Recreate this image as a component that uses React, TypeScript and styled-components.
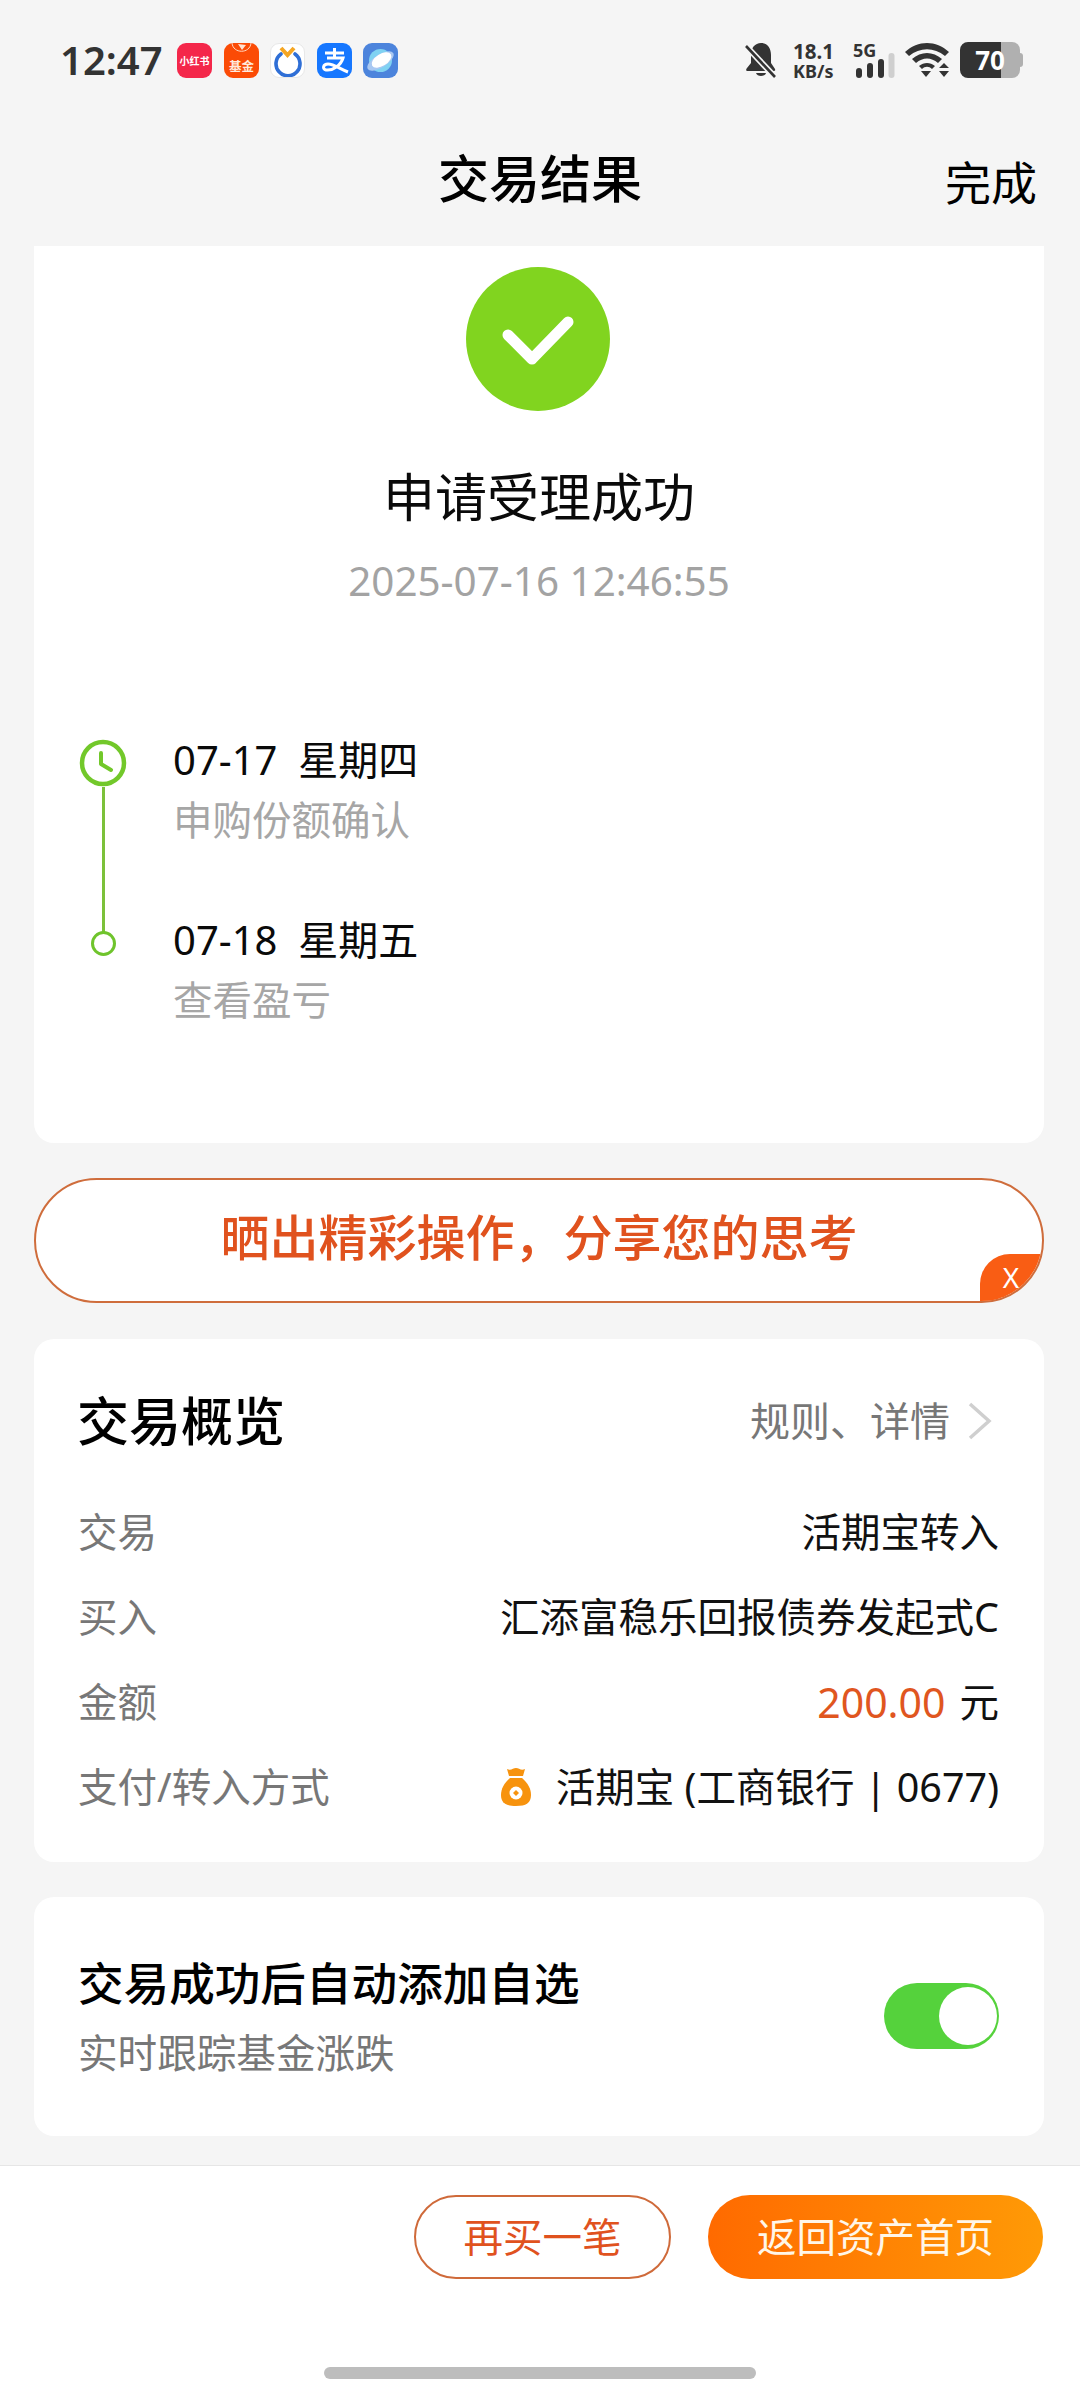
import React from "react";
import styled, { createGlobalStyle } from "styled-components";

const FONT = `"Noto Sans", "Noto Sans CJK SC", sans-serif`;

const Global = createGlobalStyle`
  html, body { margin: 0; padding: 0; background: #f5f5f5; }
  body { font-family: ${FONT}; }
`;

const Page = styled.div`
  width: 1080px;
  height: 2400px;
  display: flex;
  flex-direction: column;
  background: #f5f5f5;
  overflow: hidden;
`;

const StatusBar = styled.div`
  height: 120px;
  box-sizing: border-box;
  padding: 42px 60px 0 60px;
  display: flex;
  align-items: flex-start;
  justify-content: space-between;
`;
const StatusLeft = styled.div`
  display: flex;
  align-items: center;
  height: 36px;
`;
const Clock = styled.span`
  font: 600 40px/36px "Noto Sans", sans-serif;
  color: #333;
  width: 117px;
`;
const AppIcons = styled.div`
  display: flex;
  gap: 11.5px;
`;
const AppIcon = styled.div<{ $bg: string; $border?: boolean }>`
  width: 35px;
  height: 35px;
  border-radius: 9px;
  background: ${(p) => p.$bg};
  box-sizing: border-box;
  border: ${(p) => (p.$border ? "1px solid #e8e8e8" : "none")};
  display: flex;
  align-items: center;
  justify-content: center;
  overflow: hidden;
  color: #fff;
`;
const RedLabel = styled.span`
  font: 700 10px/11px "Noto Sans CJK SC", sans-serif;
  white-space: nowrap;
`;
const StatusRight = styled.div`
  display: flex;
  align-items: flex-start;
  height: 36px;
`;
const Speed = styled.div`
  width: 45px;
  margin-left: 16px;
  margin-top: -1px;
  display: flex;
  flex-direction: column;
  color: #333;
  font-family: "Noto Sans", sans-serif;
  font-weight: 700;
`;
const SpeedTop = styled.span`
  font-size: 20.5px;
  line-height: 20px;
`;
const SpeedBottom = styled.span`
  font-size: 18px;
  line-height: 20px;
`;
const Signal = styled.div`
  width: 42px;
  margin-left: 15px;
  display: flex;
  flex-direction: column;
  color: #333;
`;
const SignalLabel = styled.span`
  font: 700 18px/16px "Noto Sans", sans-serif;
`;
const SignalBars = styled.svg`
  overflow: visible;
  display: block;
`;
const WifiIcon = styled.svg`
  margin-left: 9px;
  display: block;
`;
const Battery = styled.div`
  position: relative;
  width: 60px;
  height: 36px;
  margin-left: 10px;
  border-radius: 8px;
  background: linear-gradient(90deg, #333 0 68%, #b0b0b0 68% 100%);
  display: flex;
  align-items: center;
  justify-content: center;
  color: #fff;
  font: 700 26px/36px "Noto Sans", sans-serif;
  &::after {
    content: "";
    position: absolute;
    right: -3px;
    top: 11px;
    width: 3px;
    height: 14px;
    border-radius: 0 3px 3px 0;
    background: #b0b0b0;
  }
`;

const Nav = styled.div`
  height: 120px;
  display: flex;
  align-items: center;
  position: relative;
  justify-content: center;
  margin-bottom: 6px;
`;
const NavTitle = styled.h1`
  margin: 0 0 4px;
  font: 500 51px/60px ${FONT};
  color: #000;
`;
const NavAction = styled.span`
  position: absolute;
  right: 43px;
  top: 32px;
  font: 400 46px/60px ${FONT};
  color: #000;
`;

const Content = styled.div`
  padding: 0 34px;
  display: flex;
  flex-direction: column;
`;
const Card = styled.section<{ $squareTop?: boolean }>`
  background: #fff;
  border-radius: ${(p) => (p.$squareTop ? "0 0 20px 20px" : "20px")};
  box-sizing: border-box;
  width: 1010px;
`;
const ResultCard = styled(Card)`
  height: 897px;
  padding-top: 21px;
  display: flex;
  flex-direction: column;
`;
const SuccessMark = styled.div`
  width: 144px;
  height: 144px;
  border-radius: 50%;
  background: #81d41f;
  align-self: center;
  margin-left: -2px;
  display: flex;
  align-items: center;
  justify-content: center;
`;
const ResultTitle = styled.div`
  margin-top: 51px;
  text-align: center;
  font: 400 52px/70px ${FONT};
  color: #0a0a0a;
`;
const ResultTime = styled.div`
  margin-top: 21px;
  text-align: center;
  font: 400 40.4px/56px ${FONT};
  color: #a3a3a3;
`;
const Timeline = styled.div`
  margin-top: 121px;
  padding-left: 45px;
  display: flex;
  flex-direction: column;
`;
const Step = styled.div<{ $last?: boolean }>`
  display: flex;
  height: ${(p) => (p.$last ? "120px" : "180px")};
`;
const StepRail = styled.div`
  width: 48px;
  margin-right: 46px;
  display: flex;
  flex-direction: column;
  align-items: center;
  padding-top: 9px;
`;
const ClockMark = styled.svg`
  display: block;
  flex: none;
`;
const RailLine = styled.div`
  width: 3px;
  flex: 1;
  margin-bottom: -22px;
  background: #7cc13a;
`;
const EndDot = styled.div`
  width: 25px;
  height: 25px;
  box-sizing: border-box;
  border: 3px solid #6fc42c;
  border-radius: 50%;
  margin-top: 12px;
  flex: none;
`;
const StepText = styled.div`
  display: flex;
  flex-direction: column;
  padding-top: 4px;
`;
const StepDate = styled.div`
  font: 400 40px/52px ${FONT};
  color: #0a0a0a;
  white-space: pre;
`;
const StepNote = styled.div`
  margin-top: 8px;
  font: 400 39.5px/52px ${FONT};
  color: #a6a6a6;
`;

const Banner = styled.div`
  position: relative;
  margin-top: 35px;
  width: 1010px;
  height: 125px;
  box-sizing: border-box;
  padding-bottom: 8px;
  background: #fff;
  border: 2px solid #cf6d3c;
  border-radius: 63px;
  display: flex;
  align-items: center;
  justify-content: center;
  overflow: hidden;
  font: 500 49px/60px ${FONT};
  color: #e0521e;
`;
const BannerClose = styled.span`
  position: absolute;
  right: 0;
  bottom: 0;
  width: 62px;
  height: 47px;
  border-radius: 30px 0 0 0;
  background: #f95d14;
  color: #fff;
  font: 400 28px/46px "Noto Sans", sans-serif;
  text-align: center;
`;

const OverviewCard = styled(Card)`
  margin-top: 36px;
  height: 523px;
  padding: 51px 45px 0 44px;
`;
const OverviewHead = styled.div`
  display: flex;
  align-items: center;
  justify-content: space-between;
  height: 62px;
  margin-bottom: 37px;
`;
const OverviewTitle = styled.h2`
  margin: 0 0 0 -1px;
  font: 500 52px/62px ${FONT};
  color: #000;
`;
const OverviewLink = styled.div`
  display: flex;
  align-items: center;
  gap: 18px;
  font: 400 40px/56px ${FONT};
  color: #777;
  margin-right: 7px;
`;
const Row = styled.div`
  height: 85px;
  display: flex;
  align-items: center;
  justify-content: space-between;
  font: 400 39.5px/56px ${FONT};
`;
const RowLabel = styled.span`
  color: #777;
`;
const RowValue = styled.span`
  color: #111;
  display: flex;
  align-items: center;
`;
const Amount = styled.span`
  color: #e0561f;
  font-size: 41px;
  margin-right: 14px;
`;
const BagIcon = styled.svg`
  margin-right: 24px;
  display: block;
`;

const WatchCard = styled(Card)`
  margin-top: 35px;
  height: 239px;
  padding: 0 45px 0 44px;
  display: flex;
  align-items: center;
  justify-content: space-between;
`;
const WatchText = styled.div`
  display: flex;
  flex-direction: column;
  gap: 13px;
`;
const WatchTitle = styled.div`
  font: 500 45.6px/60px ${FONT};
  color: #000;
`;
const WatchNote = styled.div`
  font: 400 39.6px/54px ${FONT};
  color: #777;
`;
const Toggle = styled.div`
  position: relative;
  width: 115px;
  height: 66px;
  margin-top: -2px;
  border-radius: 33px;
  background: #55d23c;
`;
const ToggleKnob = styled.span`
  position: absolute;
  right: 2px;
  top: 4px;
  width: 58px;
  height: 58px;
  border-radius: 50%;
  background: #fff;
`;

const Footer = styled.footer`
  margin-top: 29px;
  flex: 1;
  background: #fff;
  border-top: 1px solid #e6e6e6;
  position: relative;
`;
const FooterActions = styled.div`
  display: flex;
  justify-content: flex-end;
  gap: 37px;
  padding: 29px 37px 0 0;
`;
const OutlineButton = styled.button`
  width: 257px;
  height: 84px;
  box-sizing: border-box;
  border: 2px solid #cf6a3a;
  border-radius: 42px;
  background: #fff;
  color: #e0521e;
  font: 400 39.5px/50px ${FONT};
  padding: 0;
`;
const FilledButton = styled.button`
  width: 335px;
  height: 84px;
  border: 0;
  border-radius: 42px;
  background: linear-gradient(90deg, #ff6a00, #ff9a06);
  color: #fff6e8;
  font: 400 39.5px/50px ${FONT};
  padding: 0;
`;
const HomeBar = styled.div`
  position: absolute;
  left: 324px;
  top: 201px;
  width: 432px;
  height: 12px;
  border-radius: 6px;
  background: #bdbdbd;
`;

const Check = () => (
  <svg width="78" height="60" viewBox="0 0 78 60" aria-hidden>
    <path d="M9 26 L33 50 L69 13" fill="none" stroke="#fff" strokeWidth="11" strokeLinecap="round" strokeLinejoin="round" />
  </svg>
);

export default function App() {
  return (
    <Page>
      <Global />
      <StatusBar>
        <StatusLeft>
          <Clock>12:47</Clock>
          <AppIcons>
            <AppIcon $bg="#f4274a"><RedLabel>小红书</RedLabel></AppIcon>
            <AppIcon $bg="#fb4b06">
              <svg width="35" height="35" viewBox="0 0 35 35" aria-hidden>
                <path d="M8 0 C9 11 26 11 27 0" fill="none" stroke="#ffd9c4" strokeWidth="1" />
                <path d="M14 1 L22 2 L18 7 Z" fill="#ffe3d2" />
                <text x="17.5" y="28" textAnchor="middle" fontSize="12.5" fontWeight="700" fontFamily="Noto Sans CJK SC" fill="#ffe9dc">基金</text>
              </svg>
            </AppIcon>
            <AppIcon $bg="#fff" $border>
              <svg width="33" height="33" viewBox="0 0 33 33" aria-hidden>
                <path d="M10 10 A12 12 0 1 0 24 10" fill="none" stroke="#2f6fd6" strokeWidth="3.6" strokeLinecap="round" />
                <path d="M10 4 L16.5 11 L23 4" fill="none" stroke="#f5a623" strokeWidth="4" />
              </svg>
            </AppIcon>
            <AppIcon $bg="#1677ff">
              <svg width="35" height="35" viewBox="0 0 35 35" aria-hidden>
                <path d="M8 10 H27 M17.5 5 V15 M10 15 H26 C24 22 16 28 9 27 C5 26 6 21 11 21 C17 21 23 26 31 29" fill="none" stroke="#fff" strokeWidth="3" />
              </svg>
            </AppIcon>
            <AppIcon $bg="#4c84dc">
              <svg width="35" height="35" viewBox="0 0 35 35" aria-hidden>
                <circle cx="17.5" cy="17.5" r="11.5" fill="#7fd2f2" />
                <ellipse cx="17.5" cy="18" rx="15" ry="6.5" transform="rotate(-32 17.5 18)" fill="#a9c8f2" />
                <ellipse cx="18.5" cy="17" rx="11" ry="6" transform="rotate(-32 18.5 17)" fill="#fff" />
              </svg>
            </AppIcon>
          </AppIcons>
        </StatusLeft>
        <StatusRight>
          <svg width="32" height="36" viewBox="0 0 32 36" aria-hidden>
            <path d="M16 1 C23 1 26 7 26 13 V21 L30 27 C30.5 28.5 30 29 28 29 H3 C1 29 0.5 28 2 26 L6 21 V12 C6 6 10 1 16 1 Z" fill="#333" />
            <path d="M11 31 H21 C20 35 12 35 11 31 Z" fill="#333" />
            <path d="M1 4 L30 35" stroke="#f5f5f5" strokeWidth="6" />
            <path d="M1 4 L30 35" stroke="#333" strokeWidth="2.6" />
          </svg>
          <Speed>
            <SpeedTop>18.1</SpeedTop>
            <SpeedBottom>KB/s</SpeedBottom>
          </Speed>
          <Signal>
            <SignalLabel>5G</SignalLabel>
            <SignalBars width="42" height="20" viewBox="0 0 42 20" aria-hidden>
              <rect x="3" y="10" width="6" height="10" rx="3" fill="#333" />
              <rect x="14" y="5" width="6" height="15" rx="3" fill="#333" />
              <rect x="25" y="1" width="6" height="19" rx="3" fill="#333" />
              <rect x="35.5" y="-5" width="6" height="25" rx="3" fill="#cfcfcf" />
            </SignalBars>
          </Signal>
          <WifiIcon width="46" height="36" viewBox="0 0 46 36" aria-hidden>
            <path d="M1 10 C14 -2 32 -2 45 10 L41 14 C30 5 16 5 5 14 Z" fill="#333" />
            <path d="M8 17 C17 9 29 9 38 17 L34 21 C27 15 19 15 12 21 Z" fill="#333" />
            <path d="M15 24 C20 20 26 20 31 24 L28 27 C25 24 21 24 18 27 Z" fill="#333" />
            <path d="M17 29 H27 L22 35 Z" fill="#333" />
            <path d="M35 26 L40 21 L45 26 Z M35 29 H45 L40 35 Z" fill="#333" />
          </WifiIcon>
          <Battery>70</Battery>
        </StatusRight>
      </StatusBar>

      <Nav>
        <NavTitle>交易结果</NavTitle>
        <NavAction>完成</NavAction>
      </Nav>

      <Content>
        <ResultCard $squareTop>
          <SuccessMark><Check /></SuccessMark>
          <ResultTitle>申请受理成功</ResultTitle>
          <ResultTime>2025-07-16 12:46:55</ResultTime>
          <Timeline>
            <Step>
              <StepRail>
                <ClockMark width="48" height="48" viewBox="0 0 48 48" aria-hidden>
                  <circle cx="24" cy="24" r="21" fill="none" stroke="#72c82a" strokeWidth="4.5" />
                  <path d="M22 14 V25 L32 31" fill="none" stroke="#72c82a" strokeWidth="4" strokeLinecap="round" strokeLinejoin="round" />
                </ClockMark>
                <RailLine />
              </StepRail>
              <StepText>
                <StepDate>07-17  星期四</StepDate>
                <StepNote>申购份额确认</StepNote>
              </StepText>
            </Step>
            <Step $last>
              <StepRail>
                <EndDot />
              </StepRail>
              <StepText>
                <StepDate>07-18  星期五</StepDate>
                <StepNote>查看盈亏</StepNote>
              </StepText>
            </Step>
          </Timeline>
        </ResultCard>

        <Banner>
          晒出精彩操作，分享您的思考
          <BannerClose>X</BannerClose>
        </Banner>

        <OverviewCard>
          <OverviewHead>
            <OverviewTitle>交易概览</OverviewTitle>
            <OverviewLink>
              规则、详情
              <svg width="24" height="38" viewBox="0 0 24 38" aria-hidden>
                <path d="M2 2 L21 19 L2 36" fill="none" stroke="#cfcfcf" strokeWidth="3.5" />
              </svg>
            </OverviewLink>
          </OverviewHead>
          <Row><RowLabel>交易</RowLabel><RowValue>活期宝转入</RowValue></Row>
          <Row><RowLabel>买入</RowLabel><RowValue>汇添富稳乐回报债券发起式C</RowValue></Row>
          <Row><RowLabel>金额</RowLabel><RowValue><Amount>200.00</Amount>元</RowValue></Row>
          <Row>
            <RowLabel>支付/转入方式</RowLabel>
            <RowValue>
              <BagIcon width="32" height="40" viewBox="0 0 32 40" aria-hidden>
                <path d="M7 2 C11 4 13 1 16 1 C19 1 21 4 25 2 L23 9 H9 Z" fill="#f7930e" />
                <path d="M10 11 H22 C28 16 31 22 31 28 C31 36 26 39 16 39 C6 39 1 36 1 28 C1 22 4 16 10 11 Z" fill="#f7930e" />
                <circle cx="16" cy="26" r="6.5" fill="#fff" />
                <path d="M16 23 L19 26 L16 29 L13 26 Z" fill="#f7930e" />
              </BagIcon>
              活期宝 (工商银行 | 0677)
            </RowValue>
          </Row>
        </OverviewCard>

        <WatchCard>
          <WatchText>
            <WatchTitle>交易成功后自动添加自选</WatchTitle>
            <WatchNote>实时跟踪基金涨跌</WatchNote>
          </WatchText>
          <Toggle><ToggleKnob /></Toggle>
        </WatchCard>
      </Content>

      <Footer>
        <FooterActions>
          <OutlineButton>再买一笔</OutlineButton>
          <FilledButton>返回资产首页</FilledButton>
        </FooterActions>
        <HomeBar />
      </Footer>
    </Page>
  );
}
